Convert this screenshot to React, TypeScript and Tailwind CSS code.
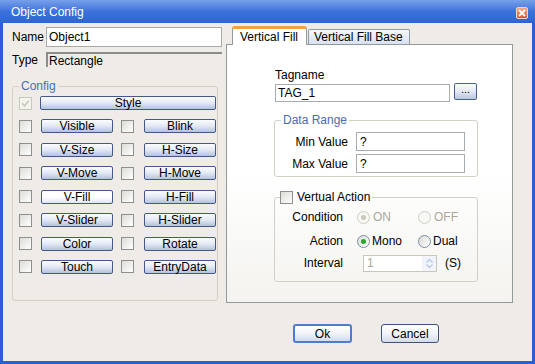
import React from 'react';

const font = "font-['Liberation_Sans',Arial,sans-serif]";

function Check({ checked, disabled }: { checked?: boolean; disabled?: boolean }) {
  return (
    <span
      className={`flex h-[13px] w-[13px] shrink-0 items-center justify-center border ${
        disabled ? 'border-[#cac8bb] bg-[#f4f3ee]' : 'border-[#8e8f8f] bg-gradient-to-br from-[#dcdcd6] to-white'
      }`}
    >
      {checked && (
        <svg width="9" height="9" viewBox="0 0 9 9">
          <path d="M1.2 4.4 L3.6 6.8 L7.8 1.8" fill="none" stroke={disabled ? '#c9c7bc' : '#21a121'} strokeWidth="1.6" />
        </svg>
      )}
    </span>
  );
}

function Radio({ checked, disabled }: { checked?: boolean; disabled?: boolean }) {
  return (
    <span
      className={`flex h-[13px] w-[13px] shrink-0 items-center justify-center rounded-full border ${
        disabled ? 'border-[#cfcdc2] bg-[#f7f7f4]' : 'border-[#7b8ea6] bg-gradient-to-br from-[#dcdcd6] to-white'
      }`}
    >
      {checked && <span className={`h-[5px] w-[5px] rounded-full ${disabled ? 'bg-[#cac8bb]' : 'bg-[#2aa52a]'}`} />}
    </span>
  );
}

function Btn({ label, w, hot }: { label: string; w: string; hot?: boolean }) {
  return (
    <div
      className={`${w} flex h-[14px] shrink-0 items-center justify-center rounded-[2px] border border-[#44598a] bg-gradient-to-b ${
        hot ? 'from-white via-white to-[#dfe6f2]' : 'from-[#fbfcfe] via-[#e3e9f3] to-[#b4c2dc]'
      } text-[12px] leading-none text-black`}
    >
      {label}
    </div>
  );
}

const rows: [string, string, boolean?][] = [
  ['Visible', 'Blink'],
  ['V-Size', 'H-Size'],
  ['V-Move', 'H-Move'],
  ['V-Fill', 'H-Fill', true],
  ['V-Slider', 'H-Slider'],
  ['Color', 'Rotate'],
  ['Touch', 'EntryData'],
];

export default function App() {
  return (
    <div className={`flex h-[364px] w-[535px] flex-col bg-[#2b5ed2] ${font} text-[12px] leading-[14px] text-black`}>
      {/* title bar */}
      <div className="flex h-[23px] shrink-0 items-center justify-between bg-gradient-to-b from-[#78a0ea] via-[#3c72dc] to-[#2d64d4] pl-[11px] pr-[7px] text-white">
        <span>Object Config</span>
        <span className="mt-[2px] flex h-[12px] w-[12px] items-center justify-center rounded-[2px] border border-[#f6d2c4] bg-gradient-to-b from-[#f3a88c] to-[#d8582e]">
          <svg width="8" height="8" viewBox="0 0 8 8">
            <path d="M1 1 L7 7 M7 1 L1 7" stroke="white" strokeWidth="1.8" />
          </svg>
        </span>
      </div>

      {/* body */}
      <div className="mx-[3px] mb-[3px] flex flex-1 bg-[#efebe7]">
        {/* left column */}
        <div className="ml-[9px] flex w-[210px] flex-col">
          <div className="mt-[4px] flex h-[20px] items-center">
            <span className="w-[34px] overflow-hidden whitespace-nowrap">Name</span>
            <div className="flex h-[20px] w-[176px] items-center border border-[#a9a9a9] bg-white pl-[2px]">Object1</div>
          </div>
          <div className="mt-[5px] flex h-[15px] items-center">
            <span className="w-[34px]">Type</span>
            <div className="flex h-[15px] w-[176px] items-center border-l-2 border-t-2 border-l-[#8c8c8c] border-t-[#8c8c8c] pl-[1px]">
              Rectangle
            </div>
          </div>

          <fieldset className="mt-[12px] w-[206px] rounded-[3px] border border-[#d3d0c4] pb-[26px]">
            <legend className="ml-[6px] px-[2px] leading-[14px] text-[#4a6cb8]">Config</legend>
            <div className="flex flex-col gap-[9.43px] pl-[6px] pt-[3px]">
              <div className="flex items-center">
                <Check checked disabled />
                <div className="ml-[8px]">
                  <Btn label="Style" w="w-[176px]" />
                </div>
              </div>
              {rows.map(([a, b, hot]) => (
                <div key={a} className="flex items-center">
                  <Check />
                  <div className="ml-[9px]">
                    <Btn label={a} w="w-[72px]" hot={hot} />
                  </div>
                  <div className="ml-[8px]">
                    <Check />
                  </div>
                  <div className="ml-[10px]">
                    <Btn label={b} w="w-[72px]" />
                  </div>
                </div>
              ))}
            </div>
          </fieldset>
        </div>

        {/* right column */}
        <div className="ml-[4px] flex w-[287px] flex-col">
          <div className="relative z-10 flex h-[21px] items-end pl-[6px]">
            <div className="mb-[-1px] flex h-[19px] w-[75px] items-start rounded-t-[3px] border-x border-x-[#919b9c] border-t-[3px] border-t-[#f0a63a] bg-white pl-[7px] pt-[1px]">
              Vertical Fill
            </div>
            <div className="ml-[1px] flex h-[15px] w-[102px] items-center rounded-t-[2px] border-x border-t border-[#919b9c] bg-gradient-to-b from-[#f4f6fb] to-[#d9e1f2] pl-[5px]">
              Vertical Fill Base
            </div>
          </div>

          <div className="flex h-[259px] flex-col border border-[#919b9c] bg-gradient-to-b from-white via-white to-[#f4f3ef] pl-[48px] pt-[23px]">
            <span>Tagname</span>
            <div className="mt-[2px] flex items-start">
              <div className="flex h-[18px] w-[175px] items-center border border-[#a5acb2] bg-white pl-[2px]">TAG_1</div>
              <div className="ml-[4px] mt-[-1px] flex h-[17px] w-[23px] items-center justify-center rounded-[2px] border border-[#4a5f8a] bg-gradient-to-b from-[#fbfcfe] via-[#e3e9f3] to-[#b9c6de] pb-[4px] text-[11px] leading-none">
                ...
              </div>
            </div>

            <fieldset className="ml-[-1px] mt-[11px] w-[204px] rounded-[3px] border border-[#d3d0c4] pb-[3px]">
              <legend className="ml-[6px] px-[2px] leading-[14px] text-[#4a6cb8]">Data Range</legend>
              <div className="flex flex-col gap-[3px] pt-[5px]">
                <div className="flex items-center">
                  <span className="w-[73px] text-right">Min Value</span>
                  <div className="ml-[8px] flex h-[19px] w-[109px] items-center border border-[#a5acb2] bg-white pl-[3px]">?</div>
                </div>
                <div className="flex items-center">
                  <span className="w-[73px] text-right">Max Value</span>
                  <div className="ml-[8px] flex h-[19px] w-[109px] items-center border border-[#a5acb2] bg-white pl-[3px]">?</div>
                </div>
              </div>
            </fieldset>

            <fieldset className="ml-[-1px] mt-[13px] w-[204px] rounded-[3px] border border-[#d3d0c4] pb-[9px]">
              <legend className="ml-[5px] flex items-center pr-[2px] leading-[14px]">
                <Check />
                <span className="ml-[4px]">Vertual Action</span>
              </legend>
              <div className="flex flex-col pt-[4px]">
                <div className="flex h-[18px] items-center">
                  <span className="w-[68px] text-right">Condition</span>
                  <div className="ml-[14px] flex w-[61px] items-center text-[#aca899]">
                    <Radio checked disabled />
                    <span className="ml-[3px]">ON</span>
                  </div>
                  <div className="flex items-center text-[#aca899]">
                    <Radio disabled />
                    <span className="ml-[3px]">OFF</span>
                  </div>
                </div>
                <div className="mt-[6px] flex h-[18px] items-center">
                  <span className="w-[68px] text-right">Action</span>
                  <div className="ml-[14px] flex w-[61px] items-center">
                    <Radio checked />
                    <span className="ml-[2px]">Mono</span>
                  </div>
                  <div className="flex items-center">
                    <Radio />
                    <span className="ml-[2px]">Dual</span>
                  </div>
                </div>
                <div className="mt-[4px] flex h-[18px] items-center">
                  <span className="w-[68px] text-right">Interval</span>
                  <div className="ml-[20px] flex h-[17px] w-[74px] items-stretch border border-[#c9c7ba] bg-white">
                    <span className="flex-1 pl-[3px] leading-[15px] text-[#aca899]">1</span>
                    <div className="flex w-[14px] flex-col items-center justify-center gap-[1px] bg-[#f1f4fa]">
                      <svg width="7" height="4" viewBox="0 0 7 4">
                        <path d="M0.5 3.5 L3.5 0.5 L6.5 3.5" fill="none" stroke="#b8c8e6" strokeWidth="1.3" />
                      </svg>
                      <svg width="7" height="4" viewBox="0 0 7 4">
                        <path d="M0.5 0.5 L3.5 3.5 L6.5 0.5" fill="none" stroke="#b8c8e6" strokeWidth="1.3" />
                      </svg>
                    </div>
                  </div>
                  <span className="ml-[8px]">(S)</span>
                </div>
              </div>
            </fieldset>
          </div>

          <div className="mt-[21px] flex gap-[29px] pl-[67px]">
            <div className="flex h-[19px] w-[59px] items-center justify-center rounded-[3px] border-2 border-[#4f7bd0] bg-gradient-to-b from-white via-[#f1f3f8] to-[#d3dbea]">
              Ok
            </div>
            <div className="flex h-[19px] w-[58px] items-center justify-center rounded-[3px] border border-[#3f5378] bg-gradient-to-b from-white via-[#f1f3f8] to-[#d3dbea]">
              Cancel
            </div>
          </div>
        </div>
      </div>
    </div>
  );
}
